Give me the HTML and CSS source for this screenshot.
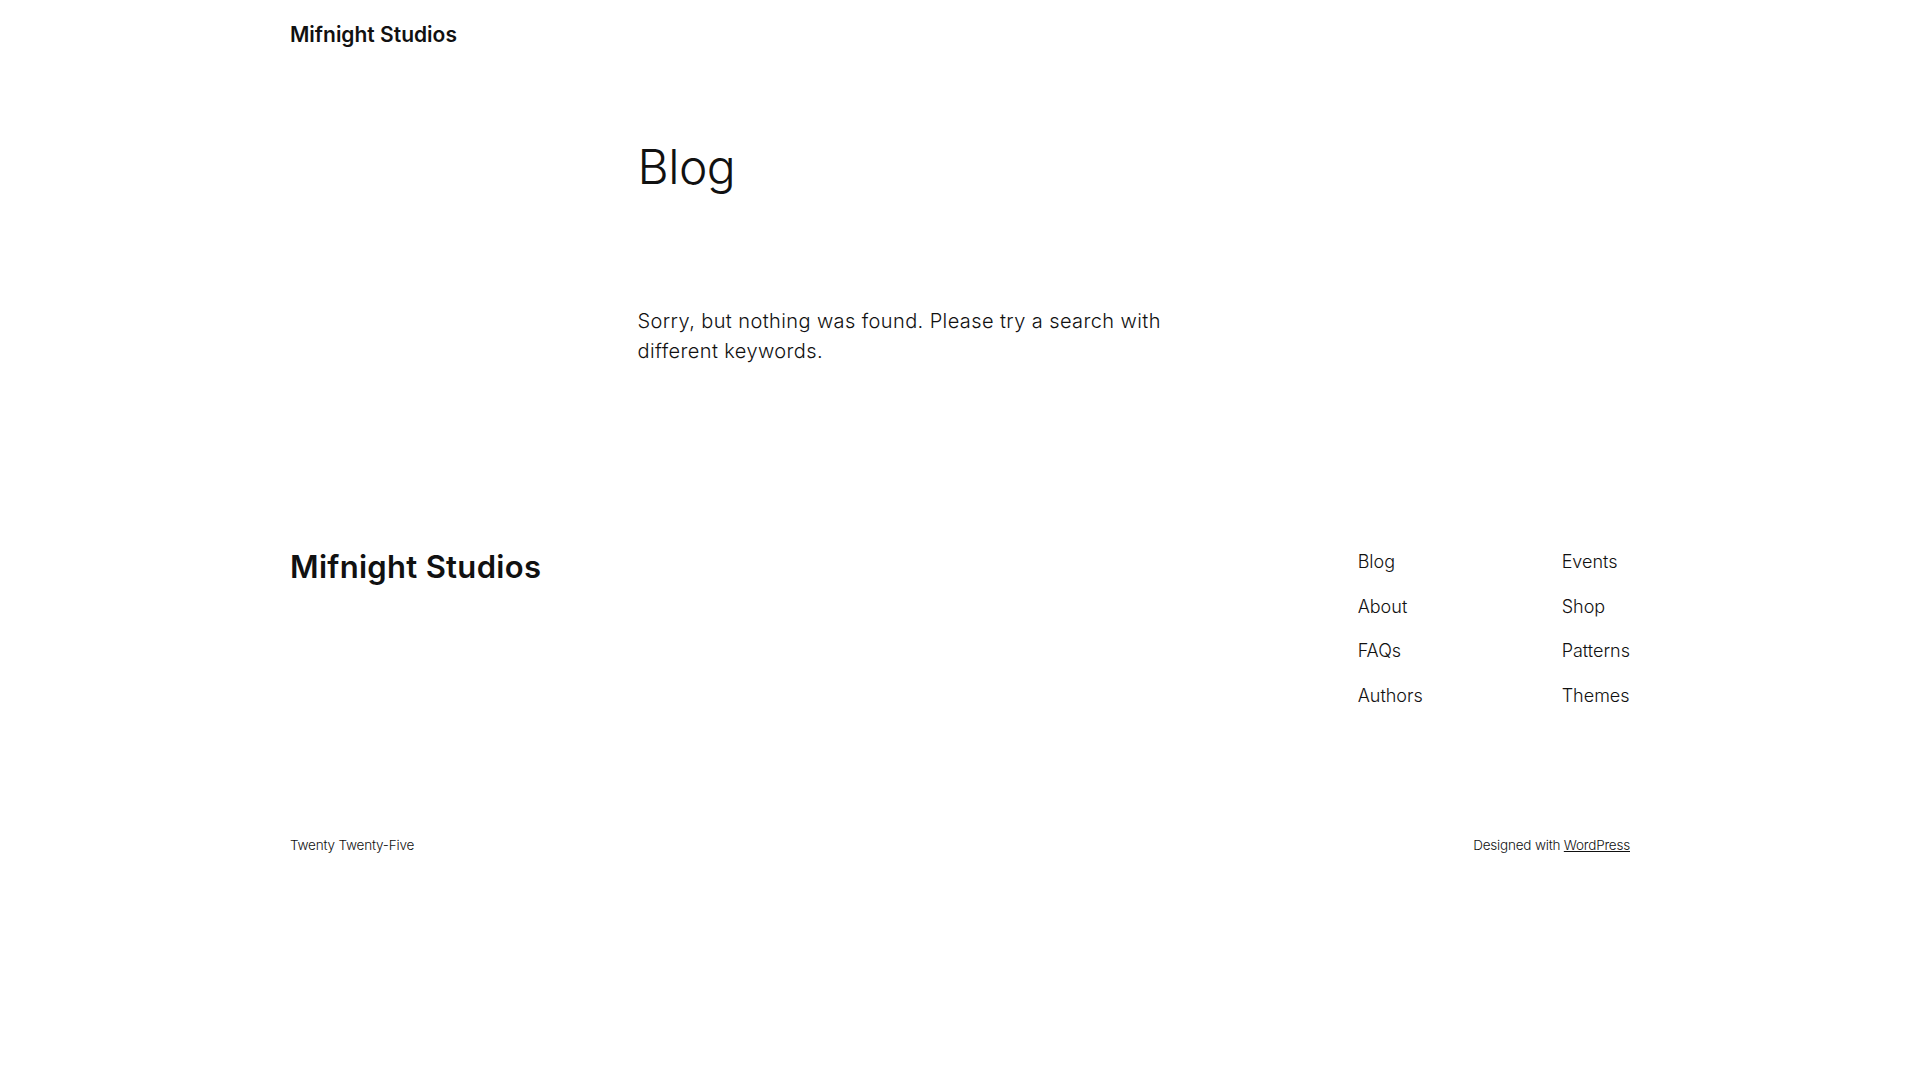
FILE: index.html
```html
<!DOCTYPE html>
<html lang="en">
<head>
    <meta charset="UTF-8">
    <meta name="viewport" content="width=device-width, initial-scale=1.0">
    <title>Blog - Mifnight Studios</title>
    <link rel="stylesheet" href="styles.css">
</head>
<body>
    <header class="site-header">
        <div class="wide">
            <a class="site-title" href="#">Mifnight Studios</a>
        </div>
    </header>

    <main class="site-main">
        <div class="content">
            <h1 class="page-title">Blog</h1>
            <p class="no-results">Sorry, but nothing was found. Please try a search with different keywords.</p>
        </div>
    </main>

    <footer class="site-footer">
        <div class="wide">
            <div class="footer-top">
                <a class="footer-title" href="#">Mifnight Studios</a>
                <nav class="footer-nav">
                    <div class="footer-col">
                        <a href="#">Blog</a>
                        <a href="#">About</a>
                        <a href="#">FAQs</a>
                        <a href="#">Authors</a>
                    </div>
                    <div class="footer-col">
                        <a href="#">Events</a>
                        <a href="#">Shop</a>
                        <a href="#">Patterns</a>
                        <a href="#">Themes</a>
                    </div>
                </nav>
            </div>
            <div class="footer-bottom">
                <p>Twenty Twenty-Five</p>
                <p>Designed with <a href="#">WordPress</a></p>
            </div>
        </div>
    </footer>
</body>
</html>
```

FILE: styles.css
```css
body {
    font-family: Inter, "Noto Sans", sans-serif;
    font-weight: 300;
    color: #111111;
    background-color: #fff;
    margin: 0;
    padding: 0;
}
a {
    color: #111111;
    text-decoration: none;
}
p {
    margin: 0;
}
.wide {
    max-width: 1340px;
    margin: 0 auto;
}
.content {
    max-width: 645px;
    margin: 0 auto;
}
.site-header {
    padding: 20px 0;
}
.site-title {
    font-size: 21px;
    font-weight: 600;
    line-height: 30px;
    display: block;
}
.site-main {
    padding-top: 67px;
}
.page-title {
    font-size: 48px;
    font-weight: 300;
    line-height: 60px;
    letter-spacing: -0.5px;
    margin: 0;
}
.no-results {
    font-size: 20px;
    line-height: 30px;
    letter-spacing: 0.4px;
    margin-top: 109px;
    max-width: 580px;
}
.site-footer {
    padding-top: 183px;
}
.footer-top {
    display: flex;
    justify-content: space-between;
    align-items: flex-start;
}
.footer-title {
    font-size: 31px;
    font-weight: 600;
    line-height: 36px;
    letter-spacing: 0.3px;
}
.footer-nav {
    display: grid;
    grid-template-columns: 204px auto;
    margin-top: -1px;
}
.footer-col {
    display: flex;
    flex-direction: column;
    gap: 17.5px;
}
.footer-col a {
    font-size: 18px;
    line-height: 27px;
}
.footer-bottom {
    display: flex;
    justify-content: space-between;
    margin-top: 126px;
    padding-bottom: 40px;
    font-size: 13.5px;
    line-height: 21px;
    letter-spacing: -0.2px;
}
.footer-bottom a {
    text-decoration: underline;
}
```
